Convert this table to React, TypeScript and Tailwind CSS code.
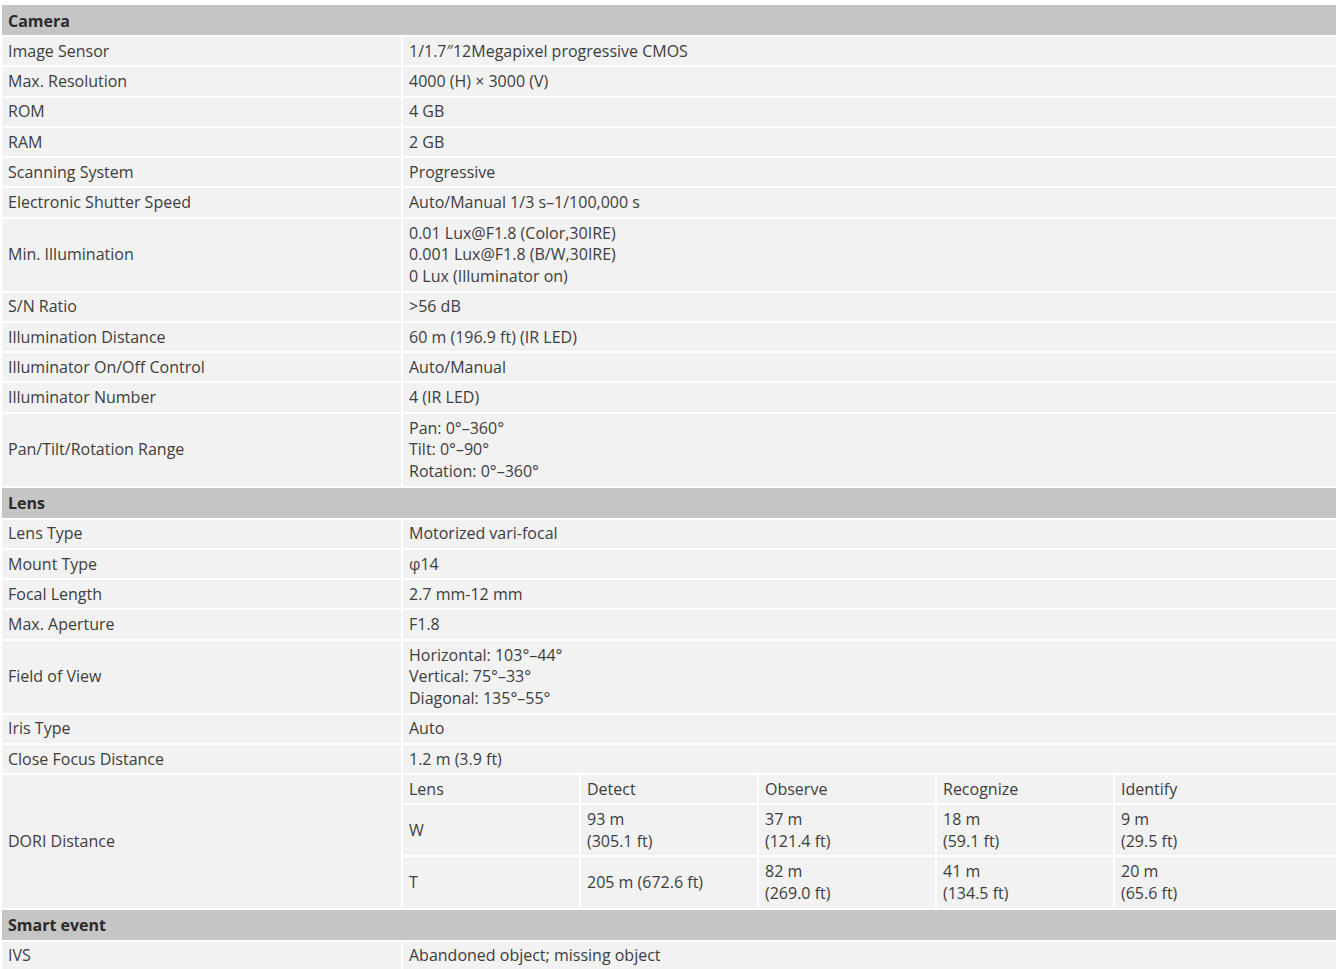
import React from 'react';

type Row = { label: string; value: string[] };

const camera: Row[] = [
  { label: 'Image Sensor', value: ['1/1.7″12Megapixel progressive CMOS'] },
  { label: 'Max. Resolution', value: ['4000 (H) × 3000 (V)'] },
  { label: 'ROM', value: ['4 GB'] },
  { label: 'RAM', value: ['2 GB'] },
  { label: 'Scanning System', value: ['Progressive'] },
  { label: 'Electronic Shutter Speed', value: ['Auto/Manual 1/3 s–1/100,000 s'] },
  {
    label: 'Min. Illumination',
    value: ['0.01 Lux@F1.8 (Color,30IRE)', '0.001 Lux@F1.8 (B/W,30IRE)', '0 Lux (Illuminator on)'],
  },
  { label: 'S/N Ratio', value: ['>56 dB'] },
  { label: 'Illumination Distance', value: ['60 m (196.9 ft) (IR LED)'] },
  { label: 'Illuminator On/Off Control', value: ['Auto/Manual'] },
  { label: 'Illuminator Number', value: ['4 (IR LED)'] },
  { label: 'Pan/Tilt/Rotation Range', value: ['Pan: 0°–360°', 'Tilt: 0°–90°', 'Rotation: 0°–360°'] },
];

const lens: Row[] = [
  { label: 'Lens Type', value: ['Motorized vari-focal'] },
  { label: 'Mount Type', value: ['φ14'] },
  { label: 'Focal Length', value: ['2.7 mm-12 mm'] },
  { label: 'Max. Aperture', value: ['F1.8'] },
  { label: 'Field of View', value: ['Horizontal: 103°–44°', 'Vertical: 75°–33°', 'Diagonal: 135°–55°'] },
  { label: 'Iris Type', value: ['Auto'] },
  { label: 'Close Focus Distance', value: ['1.2 m (3.9 ft)'] },
];

const dori: string[][][] = [
  [['Lens'], ['Detect'], ['Observe'], ['Recognize'], ['Identify']],
  [['W'], ['93 m', '(305.1 ft)'], ['37 m', '(121.4 ft)'], ['18 m', '(59.1 ft)'], ['9 m', '(29.5 ft)']],
  [['T'], ['205 m (672.6 ft)'], ['82 m', '(269.0 ft)'], ['41 m', '(134.5 ft)'], ['20 m', '(65.6 ft)']],
];

const cell = 'bg-[#f2f2f2] px-[6px] pt-[3.9px] pb-[2.6px] leading-[21.8px] flex flex-col justify-center';

function Header({ title }: { title: string }) {
  return (
    <div className="bg-[#c4c5c4] px-[6px] pt-[1px] h-[30px] flex items-center font-bold text-[#2b2b2b]">{title}</div>
  );
}

function SpecRow({ row }: { row: Row }) {
  return (
    <div className="grid grid-cols-[399px_1fr] gap-[2px]">
      <div className={cell}>{row.label}</div>
      <div className={cell}>
        {row.value.map((v) => (
          <span key={v}>{v}</span>
        ))}
      </div>
    </div>
  );
}

export default function App() {
  return (
    <div
      className="min-h-screen bg-white pt-[5px] pl-[2px] text-[16px] text-[#3d3d3d]"
      style={{ fontFamily: '"Open Sans", "Noto Sans", sans-serif' }}
    >
      <div className="w-[1334px] flex flex-col gap-[2px]">
        <Header title="Camera" />
        {camera.map((r) => (
          <SpecRow key={r.label} row={r} />
        ))}

        <Header title="Lens" />
        {lens.map((r) => (
          <SpecRow key={r.label} row={r} />
        ))}

        {/* DORI distance with nested grid */}
        <div className="grid grid-cols-[399px_1fr] gap-[2px]">
          <div className={cell}>DORI Distance</div>
          <div className="grid grid-cols-[176px_176px_176px_176px_1fr] gap-[2px]">
            {dori.map((r, i) =>
              r.map((c, j) => (
                <div key={`${i}-${j}`} className={cell}>
                  {c.map((t) => (
                    <span key={t}>{t}</span>
                  ))}
                </div>
              ))
            )}
          </div>
        </div>

        <Header title="Smart event" />
        <SpecRow row={{ label: 'IVS', value: ['Abandoned object; missing object'] }} />
      </div>
    </div>
  );
}
